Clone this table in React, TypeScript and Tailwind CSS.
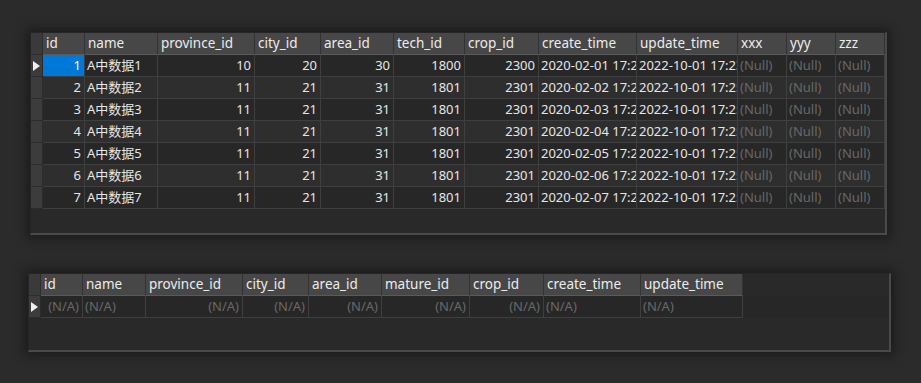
const font = { fontFamily: '"Noto Sans", "Noto Sans CJK SC", sans-serif' };

interface Col {
  key: string;
  w: number;
  right?: boolean;
}

const cols1: Col[] = [
  { key: 'id', w: 42, right: true },
  { key: 'name', w: 73 },
  { key: 'province_id', w: 97, right: true },
  { key: 'city_id', w: 66, right: true },
  { key: 'area_id', w: 73, right: true },
  { key: 'tech_id', w: 71, right: true },
  { key: 'crop_id', w: 74, right: true },
  { key: 'create_time', w: 98 },
  { key: 'update_time', w: 101 },
  { key: 'xxx', w: 49 },
  { key: 'yyy', w: 49 },
  { key: 'zzz', w: 49 },
];

const cols2: Col[] = [
  { key: 'id', w: 42, right: true },
  { key: 'name', w: 63 },
  { key: 'province_id', w: 97, right: true },
  { key: 'city_id', w: 66, right: true },
  { key: 'area_id', w: 73, right: true },
  { key: 'mature_id', w: 88, right: true },
  { key: 'crop_id', w: 74, right: true },
  { key: 'create_time', w: 97 },
  { key: 'update_time', w: 102 },
];

const rows = [1, 2, 3, 4, 5, 6, 7].map((n) => ({
  id: String(n),
  name: `A中数据${n}`,
  province_id: n === 1 ? '10' : '11',
  city_id: n === 1 ? '20' : '21',
  area_id: n === 1 ? '30' : '31',
  tech_id: n === 1 ? '1800' : '1801',
  crop_id: n === 1 ? '2300' : '2301',
  create_time: `2020-02-0${n} 17:25:00`,
  update_time: n === 1 ? '2022-10-01 17:23:00' : '2022-10-01 17:25:00',
  xxx: null,
  yyy: null,
  zzz: null,
})) as Record<string, string | null>[];

function Arrow() {
  return (
    <svg width="7" height="10" viewBox="0 0 7 10">
      <path d="M0 0 L7 5 L0 10 Z" fill="#f0f0f0" />
    </svg>
  );
}

function Header({ cols }: { cols: Col[] }) {
  return (
    <div className="flex h-[22px]">
      <div className="w-[12px] shrink-0 bg-[#3a3a3a] border-r border-b border-[#2e2e2e]" />
      {cols.map((c) => (
        <div
          key={c.key}
          style={{ width: c.w }}
          className="shrink-0 bg-[#474747] border-r border-[#333] border-b border-b-[#5a5a5a] px-[3px] text-[13.5px] leading-[20px] text-[#ececec] overflow-hidden whitespace-nowrap"
        >
          {c.key}
        </div>
      ))}
    </div>
  );
}

function Cell({ col, value, selected, na }: { col: Col; value: string | null; selected?: boolean; na?: boolean }) {
  const empty = value === null;
  return (
    <div
      style={{ width: col.w }}
      className={`shrink-0 border-r border-b border-[#3f3f3f] text-[13px] leading-[21px] overflow-hidden whitespace-nowrap ${
        col.right ? 'text-right pr-[3px] pl-[2px]' : 'text-left pl-[2px]'
      } ${selected ? 'bg-[#0078d7] text-white' : empty ? 'text-[#686868]' : 'text-[#e6e6e6]'}`}
    >
      {empty ? (na ? '(N/A)' : '(Null)') : value}
    </div>
  );
}

function Panel1() {
  return (
    <div className="ml-[30px] mt-[32px] w-[857px] h-[203px] bg-[#292929] border-l border-t border-[#262626] border-r-2 border-b-2 border-r-[#4a4a4a] border-b-[#4a4a4a] shadow-[0_0_10px_4px_rgba(0,0,0,0.35)]">
      <Header cols={cols1} />
      {rows.map((r, i) => (
        <div key={i} className={`flex h-[22px] ${i % 2 === 1 ? 'bg-[#2e2e2e]' : 'bg-[#272727]'}`}>
          <div className="w-[12px] shrink-0 bg-[#3c3c3c] border-r border-b border-[#2c2c2c] flex items-center justify-center">
            {i === 0 && <Arrow />}
          </div>
          {cols1.map((c) => (
            <Cell key={c.key} col={c} value={r[c.key]} selected={i === 0 && c.key === 'id'} />
          ))}
        </div>
      ))}
    </div>
  );
}

function Panel2() {
  return (
    <div className="ml-[28px] mt-[38px] w-[863px] h-[79px] bg-[#292929] border-l border-t border-[#262626] border-r-2 border-b-2 border-r-[#4a4a4a] border-b-[#4a4a4a] shadow-[0_0_10px_4px_rgba(0,0,0,0.35)]">
      <Header cols={cols2} />
      <div className="flex h-[22px] bg-[#272727]">
        <div className="w-[12px] shrink-0 bg-[#3c3c3c] border-r border-b border-[#2c2c2c] flex items-center justify-center">
          <Arrow />
        </div>
        {cols2.map((c) => (
          <Cell key={c.key} col={c} value={null} na />
        ))}
      </div>
    </div>
  );
}

export default function App() {
  return (
    <div style={font} className="w-[921px] h-[383px] bg-[#2b2b2b] overflow-hidden flex flex-col">
      <Panel1 />
      <Panel2 />
    </div>
  );
}
